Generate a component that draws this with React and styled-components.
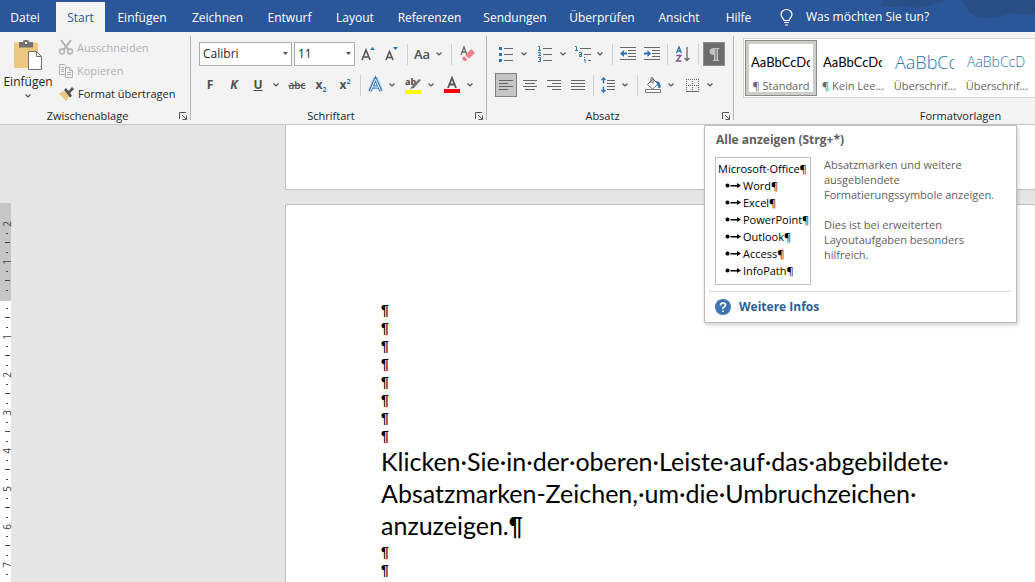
import React from 'react';
import styled, { createGlobalStyle } from 'styled-components';

const GlobalStyle = createGlobalStyle`
  * { box-sizing: border-box; }
  body { margin: 0; font: 11px/16px 'Open Sans', 'Noto Sans', sans-serif; color: #262626; overflow: hidden; }
  button { font: inherit; color: inherit; border: 0; background: none; padding: 0; }
  svg { display: block; flex: none; overflow: visible; }
  p { margin: 0; }
`;

const Window = styled.div`
  display: flex;
  flex-direction: column;
  height: 100vh;
  overflow: hidden;
  background: #e6e6e6;
`;

const TabBar = styled.nav`
  position: relative;
  display: flex;
  align-items: flex-end;
  height: 32px;
  flex: none;
  background: #2b579a;
  color: #fff;
  font-size: 12px;
`;

const Tab = styled.button`
  position: relative;
  flex: none;
  width: ${props => props.$width}px;
  height: 30px;
  padding-top: 2px;
  margin-right: ${props => props.$after || 0}px;
  white-space: nowrap;
  background: ${props => (props.$active ? '#f3f3f3' : 'transparent')};
  color: ${props => (props.$active ? '#2b579a' : '#fff')};
`;

const TellMe = styled.button`
  position: relative;
  display: flex;
  align-items: center;
  gap: 13px;
  height: 30px;
  margin-left: 15px;
  white-space: nowrap;
  color: #fff;
`;

const Pattern = styled.svg`
  position: absolute;
  top: 0;
  right: 0;
`;

const Ribbon = styled.div`
  display: flex;
  flex: none;
  height: 93px;
  padding: 4px 0;
  background: #f3f3f3;
  border-bottom: 1px solid #c8c8c8;
`;

const Group = styled.section`
  position: relative;
  display: flex;
  flex-direction: column;
  justify-content: space-between;
  flex: none;
  width: ${props => props.$width}px;
  border-right: 1px solid #b5b5b5;
`;

const GroupFooter = styled.div`
  display: flex;
  align-items: center;
  height: 9px;
  padding-right: 2px;
`;

const GroupLabel = styled.span`
  flex: 1;
  padding-right: 4px;
  line-height: 10px;
  text-align: center;
`;

const Launcher = styled.button`
  width: 9px;
  height: 9px;
`;

const Clipboard = styled.div`
  display: flex;
  gap: 3px;
`;

const PasteButton = styled.button`
  display: flex;
  flex-direction: column;
  align-items: center;
  width: 56px;
  padding-top: 4px;
  gap: 4px;
  font-size: 12px;
`;

const ClipboardList = styled.div`
  display: flex;
  flex-direction: column;
`;

const ClipboardButton = styled.button`
  display: flex;
  align-items: center;
  gap: 4px;
  height: 23px;
  white-space: nowrap;
  color: ${props => (props.disabled ? '#b1b1b1' : '#262626')};
`;

const Tools = styled.div`
  display: flex;
  flex-direction: column;
  gap: 7px;
  padding: 6px 0 0 7px;
`;

const ToolRow = styled.div`
  display: flex;
  align-items: center;
  height: 24px;
`;

const ToolButton = styled.button`
  display: flex;
  align-items: center;
  justify-content: center;
  flex: none;
  width: ${props => props.$width || 22}px;
  height: 24px;
  margin: 0 1px;
  color: #505050;
  background: ${props => props.$fill || 'transparent'};
  border: 1px solid ${props => props.$edge || 'transparent'};
`;

const CaretButton = styled.button`
  display: flex;
  align-items: center;
  justify-content: center;
  width: 12px;
  height: 22px;
  margin-right: 3px;
`;

const Divider = styled.span`
  width: 1px;
  height: 21px;
  margin: 0 3px;
  background: #cfcfcf;
`;

const SelectBox = styled.div`
  position: relative;
  width: ${props => props.$width}px;
  margin: 0 1px;

  select {
    appearance: none;
    width: 100%;
    height: 24px;
    padding: 0 3px;
    border: 1px solid #ababab;
    border-radius: 0;
    background: #fff;
    font: inherit;
    font-size: 12px;
    color: #262626;
  }

  svg {
    position: absolute;
    top: 10px;
    right: 4px;
    pointer-events: none;
  }
`;

const Glyph = styled.span`
  font-size: ${props => props.$size || 12}px;
  font-weight: ${props => props.$weight || 700};
  font-style: ${props => (props.$italic ? 'italic' : 'normal')};
  text-decoration: ${props => props.$line || 'none'};
  line-height: 16px;

  sub, sup {
    font-size: 7px;
    line-height: 0;
    color: #2e75b6;
  }
`;

const Gallery = styled.div`
  display: flex;
  margin: 2px 0 0 9px;
  padding: 1px;
  border: 1px solid #d0d0d0;
  background: #fff;
`;

const StyleItem = styled.button`
  flex: none;
  width: 72px;
  height: 56px;
  padding: 4px 1px 0;
  border: 1px solid ${props => (props.$active ? '#8b8b87' : 'transparent')};
  box-shadow: inset 0 0 0 3px ${props => (props.$active ? '#cdcdc9' : 'transparent')};
  color: #666;
`;

const Preview = styled.span`
  display: block;
  width: 59px;
  height: 31px;
  margin-left: 4px;
  overflow: hidden;
  text-align: left;
  white-space: nowrap;
  font-family: ${props => (props.$light ? "'Open Sans'" : 'Lato')}, sans-serif;
  font-weight: ${props => (props.$light ? 300 : 400)};
  font-size: ${props => props.$size}px;
  line-height: 30px;
  color: ${props => (props.$light ? '#2e74b5' : '#000')};
`;

const StyleName = styled.span`
  display: block;
  white-space: nowrap;
`;

const Tooltip = styled.aside`
  position: absolute;
  z-index: 2;
  top: 89px;
  left: 217px;
  width: 313px;
  padding: 6px 4px 4px;
  background: #fff;
  border: 1px solid #bebebe;
  box-shadow: 1px 2px 4px rgba(0, 0, 0, 0.2);
  color: #5f5f5f;
`;

const TooltipTitle = styled.h2`
  margin: 0 7px 9px;
  font-size: 12px;
  line-height: 16px;
`;

const TooltipBody = styled.div`
  display: flex;
  gap: 13px;
  padding: 0 6px 6px;
  border-bottom: 1px solid #dcdcdc;
`;

const Sample = styled.div`
  flex: none;
  width: 96px;
  height: 128px;
  padding: 2px;
  border: 1px solid #bebebe;
  font-size: 11px;
  line-height: 17px;
  white-space: nowrap;
  color: #000;
`;

const SampleList = styled.ul`
  margin: 0;
  padding: 0 0 0 7px;
  list-style: none;

  li {
    display: flex;
    align-items: center;
    gap: 2px;
  }
`;

const TooltipText = styled.div`
  line-height: 15px;
  white-space: nowrap;

  p + p {
    margin-top: 15px;
  }
`;

const HelpLink = styled.a`
  display: flex;
  align-items: center;
  gap: 8px;
  padding: 7px 6px 3px;
  color: #2b6098;
  font-size: 12px;
  font-weight: 700;
  text-decoration: none;
`;

const Workspace = styled.main`
  display: flex;
  flex: 1;
  min-height: 0;
`;

const Ruler = styled.div`
  flex: none;
  width: 11px;
  padding-top: 78px;
  color: #444;
  font-size: 10px;
`;

const RulerPart = styled.div`
  padding: ${props => (props.$margin ? '16px 0 6px' : '3px 0 0')};
  background: ${props => (props.$margin ? '#c6c6c6' : '#fff')};
`;

const RulerUnit = styled.div`
  display: flex;
  flex-direction: column;
  height: ${props => (props.$start ? 28 : 38)}px;
`;

const RulerCell = styled.span`
  display: flex;
  flex: 1;
  align-items: center;
  justify-content: center;
  min-height: 0;
  padding-left: 3px;
  line-height: 10px;

  i {
    width: ${props => (props.$long ? 5 : 2)}px;
    height: 1px;
    background: #444;
  }

  b {
    font-weight: 400;
    transform: rotate(-90deg);
  }
`;

const Pages = styled.div`
  display: flex;
  flex: 1;
  flex-direction: column;
  gap: 14px;
  min-width: 0;
  padding-left: 274px;
`;

const Sheet = styled.article`
  flex: ${props => (props.$last ? 1 : 'none')};
  min-height: ${props => (props.$last ? 0 : 65)}px;
  padding: ${props => (props.$last ? 96 : 0)}px 0 0 95px;
  border: solid #c0c0c0;
  border-width: ${props => (props.$last ? '1px 0 0 1px' : '0 0 1px 1px')};
  background: #fff;
  color: #000;
`;

const EmptyLine = styled.p`
  font: 700 14px/18px 'Liberation Sans', sans-serif;
`;

const Sentence = styled.p`
  padding-bottom: 1px;
  font: 25px/32px Lato, sans-serif;
  white-space: nowrap;

  b {
    font-family: 'Liberation Sans', sans-serif;
  }
`;

const Caret = () => (
  <svg width="6" height="4" viewBox="0 0 6 4">
    <path d="M0.5 0.5 3 3 5.5 0.5" fill="none" stroke="#555" strokeWidth="1.2" />
  </svg>
);

const SelectArrow = () => (
  <svg width="5" height="3">
    <path d="M0 0h5L2.5 3z" fill="#555" />
  </svg>
);

const PasteIcon = () => (
  <svg width="28" height="30" viewBox="0 0 28 30">
    <path d="M0 2.500h24V28H0z" fill="#edc87e" />
    <path d="M5 2h4V1.500Q9 0 11 0h2q2 0 2 1.500V2h4v5.500H5z" fill="#737373" />
    <path d="M11 2h2v2h-2z" fill="#fff" />
    <path d="M14.500 11.500h8l5 5v13h-13z" fill="#fff" stroke="#737373" />
    <path d="M22.500 11.500v5h5" fill="none" stroke="#737373" />
  </svg>
);

const CutIcon = () => (
  <svg width="14" height="15" viewBox="0 0 14 15" fill="none" stroke="#b1b1b1">
    <path d="M2 0 9.500 10M12 0 4.500 10" strokeWidth="2" />
    <circle cx="3" cy="11.500" r="2.500" strokeWidth="1.400" />
    <circle cx="11" cy="11.500" r="2.500" strokeWidth="1.400" />
  </svg>
);

const CopyIcon = () => (
  <svg width="14" height="14" viewBox="0 0 14 14" fill="#f3f3f3" stroke="#b1b1b1">
    <path d="M.5.5h5l2 2v8h-7zM2 3.500h3M2 5.500h3M2 7.500h3" />
    <path d="M6.500 3.500h4l3 3v7h-7z" />
    <path d="M10.500 3.500v3h3M8 8.500h4M8 10.500h4" />
  </svg>
);

const BrushIcon = () => (
  <svg width="15" height="14" viewBox="0 0 15 14">
    <path d="M0 6.500 5 4l5.500 5.500L7 14z" fill="#edc87e" />
    <path d="M5 3 7 1l2 2.500h1L13 0l2 2-3.500 3.500v1L13 9l-2 1.500z" fill="#555" />
  </svg>
);

const BulbIcon = () => (
  <svg width="13" height="17" viewBox="0 0 13 17" fill="none" stroke="#fff" strokeWidth="1.200">
    <path d="M4 11.500C4 9.500 1 8.500 1 5.500a5.500 5 0 0 1 11 0c0 3-3 4-3 6zM4 13.500h5M5 16h3" />
  </svg>
);

const LauncherIcon = () => (
  <svg width="8" height="8" viewBox="0 0 8 8" fill="none" stroke="#555">
    <path d="M.5 7V.5H7M3 3l4 4M7.500 3.500v4h-4" />
  </svg>
);

const FontSizeIcon = ({ down }) => (
  <svg width="14" height="16" viewBox="0 0 14 16">
    <path
      d={down ? 'M1 14 4.500 5.500 8 14M2.500 11.500h4' : 'M1 14 5 4l4 10M2.500 11h5'}
      fill="none"
      stroke="#555"
      strokeWidth="1.600"
    />
    <path d={down ? 'M8 1h5l-2.500 3z' : 'M9 4h5l-2.500-3z'} fill="#2e75b6" />
  </svg>
);

const EraserIcon = () => (
  <svg width="15" height="16" viewBox="0 0 15 16">
    <path d="M1 9 4 1l3 8M2 6h4" fill="none" stroke="#666" strokeWidth="1.300" />
    <path d="m5 9 6.500-6L15 7l-6 5.500z" fill="#e8828f" />
    <path d="M4 10l3.500 3.500L6 15H4l-2-2.500z" fill="#e8828f" />
  </svg>
);

const TextEffectIcon = () => (
  <svg width="15" height="16" viewBox="0 0 15 16" fill="none">
    <path d="M2 14 6.500 2h2L13 14M4 10h7" stroke="#b9d3ee" strokeWidth="4" />
    <path d="M2 14 7.500 2 13 14M4 10h7" stroke="#2e75b6" strokeWidth="3" />
    <path d="M2.500 13.500 7.500 2l5 11.500M4.500 10h6" stroke="#fff" />
  </svg>
);

const HighlightIcon = () => (
  <svg width="16" height="17" viewBox="0 0 16 17">
    <text x="0" y="8" fontSize="9" fontWeight="700" fill="#444">ab</text>
    <path d="m14 2 2 1-7 8-4 1 2-3z" fill="#777" />
    <path d="M0 13h16v4H0z" fill="#ff0" />
  </svg>
);

const FontColorIcon = () => (
  <svg width="16" height="16" viewBox="0 0 16 16">
    <path d="M4 11 8 1l4 10M5.500 7.500h5" fill="none" stroke="#555" strokeWidth="1.800" />
    <path d="M0 12h16v4H0z" fill="red" />
  </svg>
);

const BulletsIcon = () => (
  <svg width="14" height="16" viewBox="0 0 14 16">
    <path d="M5 2.500h9M5 8.500h9M5 14.500h9" stroke="#666" />
    <path d="M0 1h3v3H0zM0 7h3v3H0zM0 13h3v3H0z" fill="#2e75b6" />
  </svg>
);

const NumbersIcon = () => (
  <svg width="14" height="16" viewBox="0 0 14 16" fill="none">
    <path d="M5 2.500h9M5 8.500h9M5 14.500h9" stroke="#666" />
    <path d="M0 .5h1.500V4M0 4.500h3M0 6.500h2.500v1.500L.5 9.500H3M0 11.500h2.500v4H0M1 13.500h1.500" stroke="#2e75b6" />
  </svg>
);

const MultilevelIcon = () => (
  <svg width="17" height="17" viewBox="0 0 17 17" fill="none">
    <path d="M5 2.500h11M9 8.500h7M13 14.500h3" stroke="#666" />
    <path d="M0 .5h1.500V4M0 4.500h3M4 6.500h2.500v4H4.500v-2h2M9.500 11v1M9 13.500h1v3" stroke="#2e75b6" />
  </svg>
);

const IndentIcon = ({ out }) => (
  <svg width="16" height="14" viewBox="0 0 16 14">
    <path d="M0 .5h16M8 3.500h8M8 6.500h8M8 9.500h8M0 12.500h16" stroke="#666" />
    <path
      d={out ? 'M0 6.500 4 3v2.500h3v2H4V10z' : 'M7 6.500 3.500 3v2.500H0v2h3.500V10z'}
      fill="#2e75b6"
    />
  </svg>
);

const SortIcon = () => (
  <svg width="14" height="16" viewBox="0 0 14 16" fill="none">
    <path d="M.5 7 3 1l2.500 6M1.500 5h3" stroke="#2e75b6" strokeWidth="1.300" />
    <path d="M.5 9.500H5L.5 15H5.500" stroke="#8a4ba0" strokeWidth="1.300" />
    <path d="M11 1v13M8.500 12l2.500 2.500 2.500-2.500" stroke="#666" strokeWidth="1.300" />
  </svg>
);

const PilcrowIcon = () => (
  <svg width="11" height="13" viewBox="0 0 11 13">
    <path d="M10.500 0v1H9v11h1v1H4v-1h1V7C2 7 .5 5.500.5 3.500S2 0 5 0zM7.500 1h-1v11h1z" fill="#c4c4c4" fillRule="evenodd" />
  </svg>
);

const alignments = {
  left: 'M0 .5h14M0 3.500h9M0 6.500h14M0 9.500h9',
  center: 'M0 .5h14M2 3.500h10M0 6.500h14M2 9.500h10',
  right: 'M0 .5h14M5 3.500h9M0 6.500h14M5 9.500h9',
  justify: 'M0 .5h14M0 3.500h14M0 6.500h14M0 9.500h14',
};

const AlignIcon = ({ side }) => (
  <svg width="14" height="10" viewBox="0 0 14 10">
    <path d={alignments[side]} stroke="#666" />
  </svg>
);

const LineSpacingIcon = () => (
  <svg width="14" height="16" viewBox="0 0 14 16" fill="none">
    <path d="M6 3.500h8M6 6.500h8M6 9.500h8M6 12.500h8" stroke="#666" />
    <path d="M2.500 1v5.500M2.500 9.500V15M.5 3l2-2 2 2M.5 13l2 2 2-2" stroke="#2e75b6" strokeWidth="1.400" />
  </svg>
);

const BucketIcon = () => (
  <svg width="16" height="16" viewBox="0 0 16 16" fill="none">
    <path d="M2.500 7.500 8 2l5 5-5.500 5z" fill="#fff" stroke="#666" />
    <path d="M6 6V1.500Q6 .5 7 .5t1 1V7" stroke="#666" />
    <path d="M11 4q5 0 4.500 7l-2 0z" fill="#2e75b6" />
    <path d="M.5 12.500h15v3H.5z" fill="#fff" stroke="#777" />
  </svg>
);

const BordersIcon = () => (
  <svg width="13" height="13" viewBox="0 0 13 13" fill="none" stroke="#666">
    <path d="M0 .5h13M0 6.500h13M.5 0v12M6.500 0v12M12.500 0v12" strokeDasharray="1 1" />
    <path d="M0 12.500h13" />
  </svg>
);

const TabArrow = () => (
  <svg width="16" height="7" viewBox="0 0 16 7">
    <circle cx="2.500" cy="3.500" r="2" />
    <path d="M5.500 3H12V1l4 2.500L12 6V4.500H5.500z" />
  </svg>
);

const HelpIcon = () => (
  <svg width="16" height="16" viewBox="0 0 16 16">
    <circle cx="8" cy="8" r="8" fill="#3f75ae" />
    <path d="M5.500 6.500Q5.500 4 8 4t2.500 2Q10.500 7 9 8T8 10M8 11.500v1.500" fill="none" stroke="#fff" strokeWidth="1.700" />
  </svg>
);

const tabs = [
  { name: 'Datei', width: 50, after: 6 },
  { name: 'Start', width: 49, active: true },
  { name: 'Einfügen', width: 74 },
  { name: 'Zeichnen', width: 77 },
  { name: 'Entwurf', width: 67 },
  { name: 'Layout', width: 64 },
  { name: 'Referenzen', width: 85 },
  { name: 'Sendungen', width: 86 },
  { name: 'Überprüfen', width: 88 },
  { name: 'Ansicht', width: 66 },
  { name: 'Hilfe', width: 53 },
];

const styles = [
  { name: '¶ Standard', sample: 'AaBbCcDc', size: 13, active: true },
  { name: '¶ Kein Lee...', sample: 'AaBbCcDc', size: 13 },
  { name: 'Überschrif...', sample: 'AaBbCc', size: 18, light: true },
  { name: 'Überschrif...', sample: 'AaBbCcD', size: 14, light: true },
];

const programs = ['Word', 'Excel', 'PowerPoint', 'Outlook', 'Access', 'InfoPath'];

const Tool = ({ label, children, ...rest }) => (
  <ToolButton type="button" aria-label={label} {...rest}>
    {children}
  </ToolButton>
);

const More = ({ label }) => (
  <CaretButton type="button" aria-label={`${label}: Optionen`}>
    <Caret />
  </CaretButton>
);

const Footer = ({ children, launcher = true }) => (
  <GroupFooter>
    <GroupLabel>{children}</GroupLabel>
    {launcher && (
      <Launcher type="button" aria-label={`${children}: Dialog öffnen`}>
        <LauncherIcon />
      </Launcher>
    )}
  </GroupFooter>
);

const ClipboardGroup = () => (
  <Group $width={191}>
    <Clipboard>
      <PasteButton type="button">
        <PasteIcon />
        <span>Einfügen</span>
        <Caret />
      </PasteButton>
      <ClipboardList>
        <ClipboardButton type="button" disabled>
          <CutIcon />
          Ausschneiden
        </ClipboardButton>
        <ClipboardButton type="button" disabled>
          <CopyIcon />
          Kopieren
        </ClipboardButton>
        <ClipboardButton type="button">
          <BrushIcon />
          Format übertragen
        </ClipboardButton>
      </ClipboardList>
    </Clipboard>
    <Footer>Zwischenablage</Footer>
  </Group>
);

const FontGroup = () => (
  <Group $width={296}>
    <Tools>
      <ToolRow>
        <SelectBox $width={93}>
          <select aria-label="Schriftart">
            <option>Calibri</option>
          </select>
          <SelectArrow />
        </SelectBox>
        <SelectBox $width={61}>
          <select aria-label="Schriftgrad">
            <option>11</option>
          </select>
          <SelectArrow />
        </SelectBox>
        <Tool label="Schriftgrad vergrößern"><FontSizeIcon /></Tool>
        <Tool label="Schriftgrad verkleinern"><FontSizeIcon down /></Tool>
        <Divider />
        <Tool label="Groß-/Kleinschreibung" $width={20}>
          <Glyph $weight={600} $size={13}>Aa</Glyph>
        </Tool>
        <More label="Groß-/Kleinschreibung" />
        <Divider />
        <Tool label="Formatierung löschen"><EraserIcon /></Tool>
      </ToolRow>
      <ToolRow>
        <Tool label="Fett"><Glyph>F</Glyph></Tool>
        <Tool label="Kursiv"><Glyph $italic>K</Glyph></Tool>
        <Tool label="Unterstrichen"><Glyph $line="underline">U</Glyph></Tool>
        <More label="Unterstrichen" />
        <Tool label="Durchgestrichen">
          <Glyph $size={10} $weight={600} $line="line-through">abc</Glyph>
        </Tool>
        <Tool label="Tiefgestellt"><Glyph>x<sub>2</sub></Glyph></Tool>
        <Tool label="Hochgestellt"><Glyph>x<sup>2</sup></Glyph></Tool>
        <Divider />
        <Tool label="Texteffekte" $width={20}><TextEffectIcon /></Tool>
        <More label="Texteffekte" />
        <Tool label="Texthervorhebungsfarbe"><HighlightIcon /></Tool>
        <More label="Texthervorhebungsfarbe" />
        <Tool label="Schriftfarbe"><FontColorIcon /></Tool>
        <More label="Schriftfarbe" />
      </ToolRow>
    </Tools>
    <Footer>Schriftart</Footer>
  </Group>
);

const ShowAllTooltip = () => (
  <Tooltip role="tooltip">
    <TooltipTitle>Alle anzeigen (Strg+*)</TooltipTitle>
    <TooltipBody>
      <Sample>
        Microsoft·Office¶
        <SampleList>
          {programs.map(program => (
            <li key={program}>
              <TabArrow />
              {program}¶
            </li>
          ))}
        </SampleList>
      </Sample>
      <TooltipText>
        <p>Absatzmarken und weitere<br />ausgeblendete<br />Formatierungssymbole anzeigen.</p>
        <p>Dies ist bei erweiterten<br />Layoutaufgaben besonders<br />hilfreich.</p>
      </TooltipText>
    </TooltipBody>
    <HelpLink href="#hilfe">
      <HelpIcon />
      Weitere Infos
    </HelpLink>
  </Tooltip>
);

const ParagraphGroup = () => (
  <Group $width={247}>
    <Tools>
      <ToolRow>
        <Tool label="Aufzählungszeichen"><BulletsIcon /></Tool>
        <More label="Aufzählungszeichen" />
        <Tool label="Nummerierung"><NumbersIcon /></Tool>
        <More label="Nummerierung" />
        <Tool label="Liste mit mehreren Ebenen" $width={20}><MultilevelIcon /></Tool>
        <More label="Liste mit mehreren Ebenen" />
        <Divider />
        <Tool label="Einzug verkleinern"><IndentIcon out /></Tool>
        <Tool label="Einzug vergrößern"><IndentIcon /></Tool>
        <Divider />
        <Tool label="Sortieren"><SortIcon /></Tool>
        <Divider />
        <Tool label="Alle anzeigen" $fill="#6d6d6d" $edge="#8c8c8c"><PilcrowIcon /></Tool>
      </ToolRow>
      <ToolRow>
        <Tool label="Linksbündig" $fill="#c5c5c5" $edge="#7f7f7f"><AlignIcon side="left" /></Tool>
        <Tool label="Zentriert"><AlignIcon side="center" /></Tool>
        <Tool label="Rechtsbündig"><AlignIcon side="right" /></Tool>
        <Tool label="Blocksatz"><AlignIcon side="justify" /></Tool>
        <Divider />
        <Tool label="Zeilenabstand" $width={20}><LineSpacingIcon /></Tool>
        <More label="Zeilenabstand" />
        <Divider />
        <Tool label="Schattierung"><BucketIcon /></Tool>
        <More label="Schattierung" />
        <Tool label="Rahmen"><BordersIcon /></Tool>
        <More label="Rahmen" />
      </ToolRow>
    </Tools>
    <Footer>Absatz</Footer>
    <ShowAllTooltip />
  </Group>
);

const StylesGroup = () => (
  <Group $width={460}>
    <Gallery>
      {styles.map((item, index) => (
        <StyleItem type="button" key={index} $active={item.active}>
          <Preview $size={item.size} $light={item.light}>{item.sample}</Preview>
          <StyleName>{item.name}</StyleName>
        </StyleItem>
      ))}
    </Gallery>
    <Footer launcher={false}>Formatvorlagen</Footer>
  </Group>
);

const RulerMarks = ({ number }) => (
  <RulerUnit $start={!number}>
    {number && <RulerCell><b>{number}</b></RulerCell>}
    <RulerCell><i /></RulerCell>
    <RulerCell $long><i /></RulerCell>
    <RulerCell><i /></RulerCell>
  </RulerUnit>
);

const EmptyLines = ({ count }) =>
  Array.from({ length: count }, (_, index) => <EmptyLine key={index}>¶</EmptyLine>);

const App = () => (
  <Window>
    <GlobalStyle />
    <TabBar>
      <Pattern width="155" height="32" viewBox="0 0 155 32">
        <path d="M4 0 1 6q9 2 20 0 12 4 30-1l16-5z" fill="#2a4f87" />
        <path d="M86 6q2 9 14 11 14 2 33-4 12 4 22 1V0H80z" fill="#2a4f87" />
      </Pattern>
      {tabs.map(tab => (
        <Tab
          type="button"
          key={tab.name}
          $width={tab.width}
          $after={tab.after}
          $active={tab.active}
        >
          {tab.name}
        </Tab>
      ))}
      <TellMe type="button">
        <BulbIcon />
        Was möchten Sie tun?
      </TellMe>
    </TabBar>
    <Ribbon>
      <ClipboardGroup />
      <FontGroup />
      <ParagraphGroup />
      <StylesGroup />
    </Ribbon>
    <Workspace>
      <Ruler>
        <RulerPart $margin>
          <RulerMarks number={2} />
          <RulerMarks number={1} />
        </RulerPart>
        <RulerPart>
          <RulerMarks />
          {[1, 2, 3, 4, 5, 6, 7].map(number => (
            <RulerMarks key={number} number={number} />
          ))}
        </RulerPart>
      </Ruler>
      <Pages>
        <Sheet />
        <Sheet $last>
          <EmptyLines count={8} />
          <Sentence>
            Klicken·Sie·in·der·oberen·Leiste·auf·das·abgebildete·<br />
            Absatzmarken-Zeichen,·um·die·Umbruchzeichen·<br />
            anzuzeigen.<b>¶</b>
          </Sentence>
          <EmptyLines count={2} />
        </Sheet>
      </Pages>
    </Workspace>
  </Window>
);

export default App;
